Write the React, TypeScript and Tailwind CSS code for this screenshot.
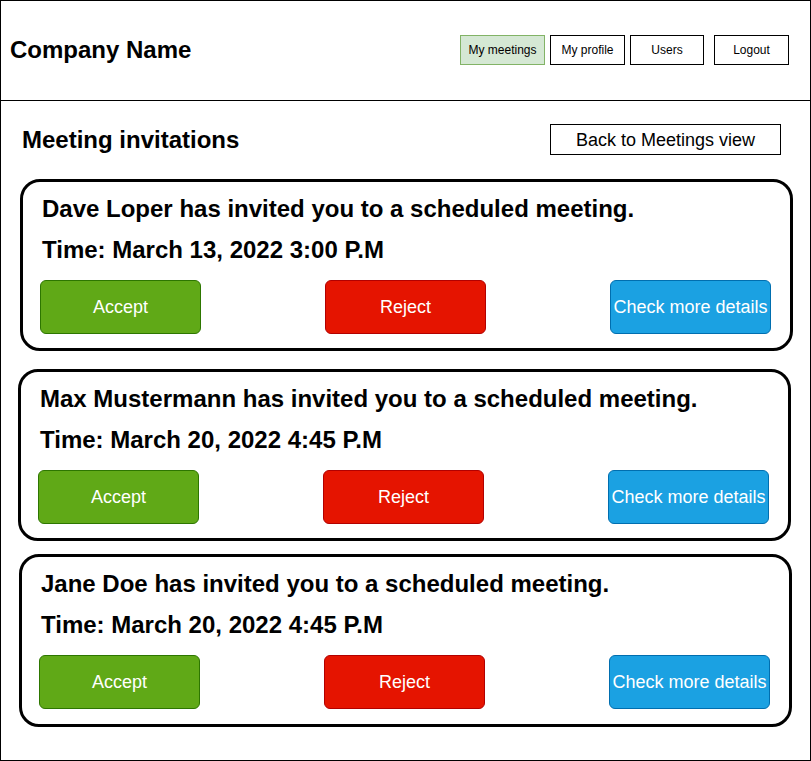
const invitations = [
  {
    host: "Dave Loper",
    time: "March 13, 2022 3:00 P.M",
    box: "mt-[24px] ml-[19px] mr-[17px] h-[172px]",
  },
  {
    host: "Max Mustermann",
    time: "March 20, 2022 4:45 P.M",
    box: "mt-[18px] ml-[17px] mr-[19px] h-[172px]",
  },
  {
    host: "Jane Doe",
    time: "March 20, 2022 4:45 P.M",
    box: "mt-[13px] ml-[18px] mr-[18px] h-[173px]",
  },
];

function NavButton({ label, active, className }: { label: string; active?: boolean; className: string }) {
  return (
    <button
      className={
        "h-[30px] border text-[12px] text-black " +
        (active ? "bg-[#d5e8d4] border-[#82b366] " : "bg-white border-black ") +
        className
      }
    >
      {label}
    </button>
  );
}

export default function App() {
  return (
    <div
      className="w-[811px] h-[761px] border border-black bg-white text-black overflow-hidden"
      style={{ fontFamily: '"Liberation Sans", Arial, Helvetica, sans-serif' }}
    >
      {/* Header */}
      <header className="h-[100px] border-b border-black flex items-center justify-between pl-[9px] pr-[21px] pb-[1px]">
        <h1 className="text-[24px] font-bold leading-none">Company Name</h1>
        <nav className="flex items-center">
          <NavButton label="My meetings" active className="w-[85px]" />
          <NavButton label="My profile" className="w-[75px] ml-[5px]" />
          <NavButton label="Users" className="w-[74px] ml-[5px]" />
          <NavButton label="Logout" className="w-[75px] ml-[10px]" />
        </nav>
      </header>

      {/* Title row */}
      <div className="flex items-center justify-between pl-[21px] pr-[29px] mt-[23px]">
        <h2 className="text-[24px] font-bold leading-none">Meeting invitations</h2>
        <button className="w-[231px] h-[31px] border border-black text-[18px] leading-none">
          Back to Meetings view
        </button>
      </div>

      {/* Invitation cards */}
      {invitations.map((inv) => (
        <div
          key={inv.host}
          className={"border-[3px] border-black rounded-[20px] pl-[17px] pr-[19px] pt-[12px] flex flex-col " + inv.box}
        >
          <p className="text-[24px] font-bold leading-[30px] pl-[2px]">
            {inv.host} has invited you to a scheduled meeting.
          </p>
          <p className="text-[24px] font-bold leading-[30px] mt-[11px] pl-[2px]">Time: {inv.time}</p>
          <div className="flex justify-between mt-[15px]">
            <button className="w-[161px] h-[54px] rounded-[6px] border border-[#2d7600] bg-[#60a917] text-white text-[18px]">
              Accept
            </button>
            <button className="w-[161px] h-[54px] rounded-[6px] border border-[#b20000] bg-[#e51400] text-white text-[18px]">
              Reject
            </button>
            <button className="w-[161px] h-[54px] rounded-[6px] border border-[#006eaf] bg-[#1ba1e2] text-white text-[18px] whitespace-nowrap">
              Check more details
            </button>
          </div>
        </div>
      ))}
    </div>
  );
}
